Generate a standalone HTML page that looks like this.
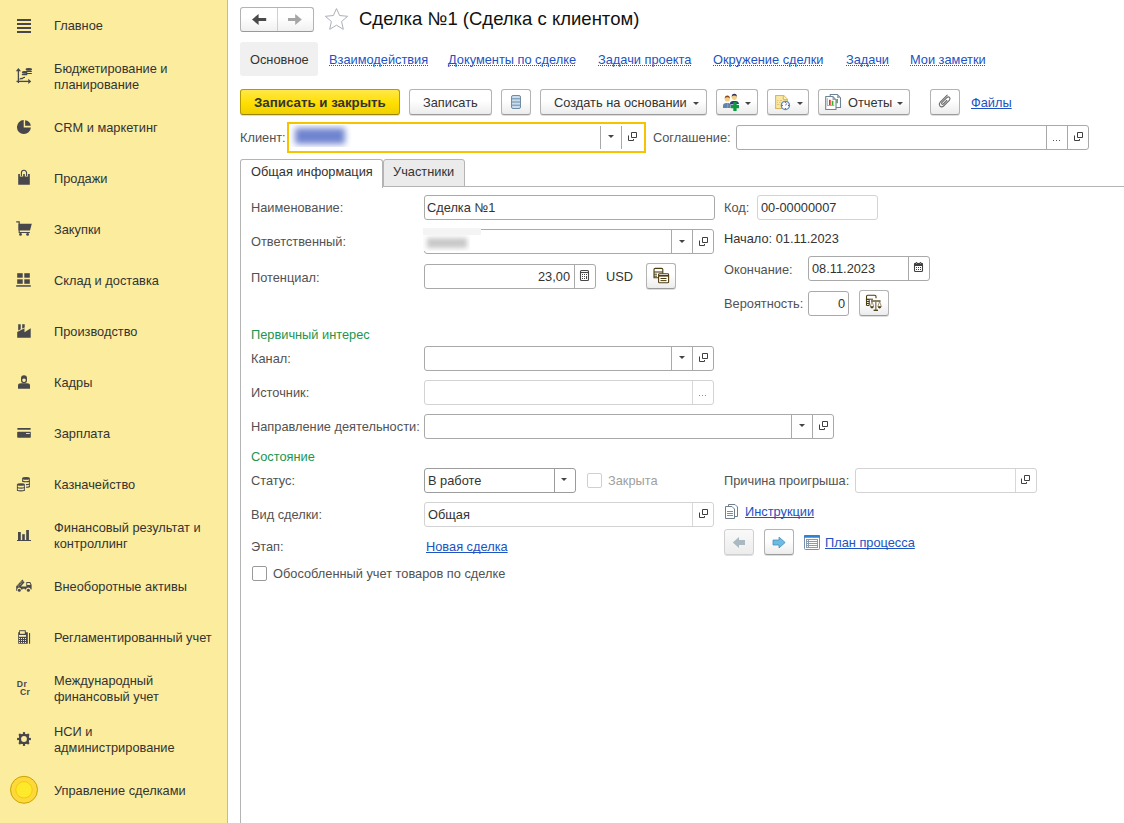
<!DOCTYPE html>
<html><head><meta charset="utf-8">
<style>
*{margin:0;padding:0;box-sizing:border-box}
html,body{width:1124px;height:823px;overflow:hidden;background:#fff;font-family:"Liberation Sans",sans-serif;font-size:13px;color:#333}
.a{position:absolute}
.t{position:absolute;white-space:nowrap;line-height:15px;font-size:13px}
#side{position:absolute;left:0;top:0;width:228px;height:823px;background:#fbec9e;border-right:1px solid #cbbb7e}
.si{position:absolute;left:54px;color:#333;line-height:16px;font-size:12.8px}
.ic{position:absolute;left:12px;width:24px;height:24px}
.ic{fill:#47474c}
</style></head><body>
<div id="side">
<!-- 1 Главное -->
<svg class="ic" style="top:13px" viewBox="0 0 24 24"><rect x="5" y="6" width="14" height="2"/><rect x="5" y="10" width="14" height="2"/><rect x="5" y="14" width="14" height="2"/><rect x="5" y="18" width="14" height="2"/></svg>
<div class="si" style="top:18px">Главное</div>
<!-- 2 -->
<svg class="ic" style="top:64px" viewBox="0 0 24 24"><path d="M6.4 5.5v13.5" stroke="#47474c" stroke-width="1.3" fill="none"/><path d="M3.8 7.2L6.4 4 9 7.2z"/><path d="M4.5 17.4h13" stroke="#47474c" stroke-width="1.3" fill="none"/><path d="M16.3 14.8L19.2 17.4 16.3 20z"/><path d="M7.6 15.4L9 14.3 10.3 14.5 11.6 13.5 13 13.4" stroke="#47474c" stroke-width="1.2" fill="none"/><ellipse cx="16.8" cy="5.4" rx="3.2" ry="1.3"/><path d="M14.2 7.5H19.4M14.2 9.5H19.4" stroke="#47474c" stroke-width="1.1" stroke-linecap="round" fill="none"/><ellipse cx="12.6" cy="8.4" rx="2.8" ry="1.3"/><path d="M10.3 10.6H14.9" stroke="#47474c" stroke-width="1.1" stroke-linecap="round" fill="none"/></svg>
<div class="si" style="top:61px">Бюджетирование и<br>планирование</div>
<!-- 3 CRM -->
<svg class="ic" style="top:115px" viewBox="0 0 24 24"><path d="M11.7 5.1A7 7 0 1 0 18.9 12.6H11.7z"/><path d="M13.1 5.2A6 6 0 0 1 18.8 10.8H13.1z"/></svg>
<div class="si" style="top:120px">CRM и маркетинг</div>
<!-- 4 Продажи -->
<svg class="ic" style="top:166px" viewBox="0 0 24 24"><path d="M6.2 8H7.9V10.6H11.2V8H12.8V10.6H16.1V8H17.8V18.8H6.2z"/><path d="M9.4 10V6.9A2.6 2.6 0 0 1 14.6 6.9V10" stroke="#47474c" stroke-width="1.1" fill="none"/></svg>
<div class="si" style="top:171px">Продажи</div>
<!-- 5 Закупки -->
<svg class="ic" style="top:217px" viewBox="0 0 24 24"><path d="M4.2 4.8H7.2V13.5" stroke="#47474c" stroke-width="1.2" fill="none"/><path d="M6.5 6.8H19.8L18 13.6H6.5z"/><path d="M7.2 13.5V15.5H17.8" stroke="#47474c" stroke-width="1.1" fill="none"/><circle cx="8.5" cy="17.4" r="1.4"/><circle cx="15.6" cy="17.4" r="1.4"/></svg>
<div class="si" style="top:222px">Закупки</div>
<!-- 6 Склад -->
<svg class="ic" style="top:268px" viewBox="0 0 24 24"><rect x="5.2" y="5.2" width="5.5" height="4.5"/><rect x="12.3" y="5.2" width="5.5" height="4.5"/><rect x="5.2" y="11.3" width="5.5" height="4.5"/><rect x="12.3" y="11.3" width="5.5" height="4.5"/><rect x="4.2" y="17.2" width="14.6" height="1.5"/></svg>
<div class="si" style="top:273px">Склад и доставка</div>
<!-- 7 Производство -->
<svg class="ic" style="top:319px" viewBox="0 0 24 24"><path d="M6.2 5.2H8.7V10.3L6.2 11.6z"/><path d="M10.2 5.2H12.7V8.4L10.2 9.6z"/><path d="M5.2 13L12.5 9.3V13.2L18.7 9.2V18.7H5.2z"/></svg>
<div class="si" style="top:324px">Производство</div>
<!-- 8 Кадры -->
<svg class="ic" style="top:370px" viewBox="0 0 24 24"><path d="M9 8.5A3 3.3 0 0 1 15 8.5V10.5A3 2.8 0 0 1 9 10.5z"/><path d="M10.3 9.3Q12 7.6 13.7 9.3V11Q12 13.2 10.3 11z" fill="#fbec9e" style="fill:#fbec9e"/><path d="M6 18.7V15.6Q6 13.3 9 13.3H15Q18 13.3 18 15.6V18.7z"/></svg>
<div class="si" style="top:375px">Кадры</div>
<!-- 9 Зарплата -->
<svg class="ic" style="top:421px" viewBox="0 0 24 24"><rect x="5.2" y="7" width="13.6" height="1.8" rx=".8"/><path d="M5.2 11.2Q5.2 10.8 5.8 10.8H18.2Q18.8 10.8 18.8 11.4V16.1Q18.8 16.8 18 16.8H6Q5.2 16.8 5.2 16z"/><rect x="14" y="12.1" width="3.8" height="0.9" style="fill:#fbec9e"/></svg>
<div class="si" style="top:426px">Зарплата</div>
<!-- 10 Казначейство -->
<svg class="ic" style="top:472px" viewBox="0 0 24 24"><ellipse cx="14" cy="6.4" rx="3.8" ry="1.3"/><path d="M10.2 8.6Q14 9.9 17.8 8.6V9.7Q14 11 10.2 9.7z"/><path d="M14 12.1Q16 12.1 17.8 11.5V12.6Q16 13.2 14 13.2z"/><path d="M14 14.7Q16 14.7 17.8 14.1V15.2Q16 15.8 14 15.8z"/><path d="M10.6 6.4V9.6M17.4 6.4V15" stroke="#47474c" stroke-width=".9" fill="none"/><ellipse cx="8.9" cy="12.5" rx="3.9" ry="1.3"/><path d="M5 14.9Q8.9 16.2 12.8 14.9V16Q8.9 17.3 5 16z"/><path d="M5 17.7Q8.9 19 12.8 17.7V18.8Q8.9 20.1 5 18.8z"/><path d="M5.4 12.5V18.6M12.4 12.5V18.6" stroke="#47474c" stroke-width=".9" fill="none"/></svg>
<div class="si" style="top:477px">Казначейство</div>
<!-- 11 Финансовый -->
<svg class="ic" style="top:523px" viewBox="0 0 24 24"><rect x="6" y="9" width="2.8" height="8.5"/><rect x="10.2" y="11.2" width="2.6" height="6.3"/><rect x="14.2" y="7" width="2.7" height="10.5"/><rect x="5" y="17" width="14" height="1"/></svg>
<div class="si" style="top:520px">Финансовый результат и<br>контроллинг</div>
<!-- 12 Внеоборотные -->
<svg class="ic" style="top:574px" viewBox="0 0 24 24"><path d="M4.2 12.2L10.4 5.6 12.6 8.3 8.8 12.6H14.3V8H18.2L19.6 10.8V15.5H18.8Q18.5 13.5 16.4 13.5Q14.3 13.5 14 15.6H12.8V14.7H10.6V15.5H9.2Q8.8 13.6 7.3 13.6Q5.2 13.6 5 16.7H4.2z"/><path d="M15.2 9.1V11H18.5L17.6 9.1z" style="fill:#fbec9e"/><path d="M5.6 11.9L10.8 6.3M6.6 12.4L11.6 7.2" stroke="#fbec9e" stroke-width=".7" stroke-dasharray=".9 1.1" fill="none"/><circle cx="7.3" cy="16.3" r="1.5"/><circle cx="16.4" cy="16.3" r="1.5"/></svg>
<div class="si" style="top:579px">Внеоборотные активы</div>
<!-- 13 Регламентированный -->
<svg class="ic" style="top:625px" viewBox="0 0 24 24"><path d="M7.2 5.2H13.8V7.2H15.8V18.8H6.2V7.2H7.2z"/><rect x="8" y="6.2" width="4.8" height="2.6" style="fill:#fbec9e"/><rect x="7" y="10" width="7" height="1.8" style="fill:#fbec9e"/><g style="fill:#fbec9e"><rect x="7" y="13" width="1" height="1"/><rect x="9" y="13" width="1" height="1"/><rect x="11" y="13" width="1" height="1"/><rect x="13" y="13" width="1" height="1"/><rect x="7" y="15" width="1" height="1"/><rect x="9" y="15" width="1" height="1"/><rect x="11" y="15" width="1" height="1"/><rect x="13" y="15" width="1" height="1"/><rect x="7" y="17" width="1" height="1"/><rect x="9" y="17" width="1" height="1"/><rect x="11" y="17" width="1" height="1"/><rect x="13" y="17" width="1" height="1"/></g><rect x="17" y="8" width="1.1" height="10.8"/></svg>
<div class="si" style="top:630px">Регламентированный учет</div>
<!-- 14 Dr Cr -->
<svg class="ic" style="top:676px" viewBox="0 0 24 24"><text x="4.8" y="11" style="font:bold 8.6px 'Liberation Sans';letter-spacing:.4px;fill:#47474c">Dr</text><text x="7.9" y="19" style="font:bold 8.6px 'Liberation Sans';letter-spacing:.4px;fill:#47474c">Cr</text></svg>
<div class="si" style="top:673px">Международный<br>финансовый учет</div>
<!-- 15 НСИ gear -->
<svg class="ic" style="top:727px" viewBox="0 0 24 24"><rect x="7" y="7" width="10" height="10" rx="3"/><rect x="10.9" y="5.1" width="2.2" height="3" transform="rotate(0 12 12)"/><rect x="10.9" y="5.1" width="2.2" height="3" transform="rotate(45 12 12)"/><rect x="10.9" y="5.1" width="2.2" height="3" transform="rotate(90 12 12)"/><rect x="10.9" y="5.1" width="2.2" height="3" transform="rotate(135 12 12)"/><rect x="10.9" y="5.1" width="2.2" height="3" transform="rotate(180 12 12)"/><rect x="10.9" y="5.1" width="2.2" height="3" transform="rotate(225 12 12)"/><rect x="10.9" y="5.1" width="2.2" height="3" transform="rotate(270 12 12)"/><rect x="10.9" y="5.1" width="2.2" height="3" transform="rotate(315 12 12)"/><circle cx="12" cy="12" r="2.9" style="fill:#fbec9e"/></svg>
<div class="si" style="top:724px">НСИ и<br>администрирование</div>
<!-- 16 circle -->
<svg class="a" style="left:9px;top:775px;width:30px;height:30px" viewBox="0 0 30 30"><circle cx="15" cy="14.8" r="13.5" fill="#ffd83c" stroke="#c7a600" stroke-width="1"/><circle cx="15" cy="14.8" r="8.2" fill="#ffe92b" stroke="#f0c400" stroke-width=".8"/></svg>
<div class="si" style="top:783px">Управление сделками</div>
</div>

<div id="main">
<style>
.lb{position:absolute;white-space:nowrap;font-size:12.8px;line-height:16px;color:#525252}
.lk{position:absolute;white-space:nowrap;font-size:12.8px;line-height:16px;color:#2152c2}
.lku{text-decoration:underline;text-underline-offset:1px;text-decoration-skip-ink:none}
.dot{background-image:linear-gradient(to right,#2152c2 50%,transparent 50%);background-size:2px 1px;background-repeat:repeat-x;background-position:0 13px}
.fld{position:absolute;background:#fff;border:1px solid #a9a9a9;border-radius:3px}
.fld.lt{border-color:#d3d3d3}
.sp{position:absolute;top:0;bottom:0;width:1px;background:#a9a9a9}
.btn{position:absolute;height:26px;border:1px solid #b3b3b3;border-bottom-color:#9a9a9a;border-radius:3px;background:linear-gradient(#fff 0%,#fff 45%,#ececec 100%);box-shadow:0 1px 0 rgba(0,0,0,.13)}
.bt{position:absolute;white-space:nowrap;font-size:12.8px;line-height:16px;color:#333}
.dd{position:absolute;width:0;height:0;border-left:3px solid transparent;border-right:3px solid transparent;border-top:3px solid #444}
.op{position:absolute;width:10px;height:10px}
.vt{position:absolute;white-space:nowrap;font-size:12.8px;line-height:16px;color:#333}
.grn{position:absolute;white-space:nowrap;font-size:12.8px;line-height:16px;color:#1a9650}
</style>
<!-- nav -->
<div class="a" style="left:240px;top:7px;width:74px;height:25px;border:1px solid #b3b3b3;border-bottom-color:#999;border-radius:3px;background:linear-gradient(#fff 40%,#f0f0f0)"></div>
<div class="a" style="left:277px;top:8px;width:1px;height:23px;background:#d0d0d0"></div>
<svg class="a" style="left:250px;top:12px;width:18px;height:16px" viewBox="0 0 18 16"><path d="M2 7.5L8.6 2V6H16.2V9H8.6V13z" fill="#4a4a4a"/></svg>
<svg class="a" style="left:286px;top:12px;width:18px;height:16px" viewBox="0 0 18 16"><path d="M15.8 7.5L9.2 2V6H2V9H9.2V13z" fill="#a5a5a5"/></svg>
<svg class="a" style="left:323px;top:7px;width:27px;height:24px" viewBox="0 0 27 24"><path d="M13.5 1.6L16.6 8.5 24.6 9.3 18.6 14.5 20.3 22.3 13.5 18.2 6.7 22.3 8.4 14.5 2.4 9.3 10.4 8.5z" fill="none" stroke="#aab1b9" stroke-width="1"/></svg>
<div class="a" style="left:359px;top:8px;font-size:18.5px;line-height:21px;color:#111;white-space:nowrap">Сделка №1 (Сделка с клиентом)</div>

<!-- section tabs -->
<div class="a" style="left:240px;top:42px;width:78px;height:34px;background:#f0f0f0;border-radius:3px"></div>
<div class="bt" style="left:250px;top:52px">Основное</div>
<div class="lk dot" style="left:329px;top:52px">Взаимодействия</div>
<div class="lk dot" style="left:448px;top:52px">Документы по сделке</div>
<div class="lk dot" style="left:598px;top:52px">Задачи проекта</div>
<div class="lk dot" style="left:713px;top:52px">Окружение сделки</div>
<div class="lk dot" style="left:846px;top:52px">Задачи</div>
<div class="lk dot" style="left:910px;top:52px">Мои заметки</div>

<!-- command bar -->
<div class="btn" style="left:240px;top:89px;width:160px;border-color:#b39b00;border-bottom-color:#9a8400;background:linear-gradient(#ffe84a,#ffdf00 55%,#f0cf00)"></div>
<div class="bt" style="left:254px;top:95px;font-weight:bold;font-size:13.3px;color:#333">Записать и закрыть</div>
<div class="btn" style="left:409px;top:89px;width:83px"></div>
<div class="bt" style="left:423px;top:95px">Записать</div>
<div class="btn" style="left:501px;top:89px;width:30px"></div>
<svg class="a" style="left:510px;top:94px;width:12px;height:16px" viewBox="0 0 12 16"><rect x="1.5" y="1.5" width="9" height="13" rx="1.5" fill="#c9dced" stroke="#6d8ca6" stroke-width="1"/><path d="M1.5 4.8H10.5M1.5 8H10.5M1.5 11.2H10.5" stroke="#6d8ca6" stroke-width="1"/></svg>
<div class="btn" style="left:540px;top:89px;width:167px"></div>
<div class="bt" style="left:554px;top:95px">Создать на основании</div>
<div class="dd" style="left:693px;top:102px"></div>
<div class="btn" style="left:716px;top:89px;width:42px"></div>
<svg class="a" style="left:716px;top:88px;width:30px;height:28px" viewBox="0 0 30 28"><path d="M7 20V17.6Q7 15 10.5 15H12.3Q14.6 15 14.6 17.5V20z" fill="#5a86b0"/><rect x="11" y="15" width="1.2" height="5" fill="#e07a5a"/><circle cx="11.3" cy="11" r="2.6" fill="#f3cf86"/><path d="M8.7 10.6Q8.7 7.6 11.3 7.6Q13.9 7.6 13.9 10.6Q12.5 9 11.3 9.3Q10 9 8.7 10.6z" fill="#8a4a12"/><path d="M13.6 16.4Q14.2 13 17 13H19.6Q22.6 13 23 16z" fill="#2f3c78"/><circle cx="18.3" cy="9.3" r="2.6" fill="#f3cf86"/><path d="M15.7 8.8Q15.7 5.8 18.3 5.8Q20.9 5.8 20.9 8.8Q19.5 7.2 18.3 7.5Q17 7.2 15.7 8.8z" fill="#2e2e58"/><path d="M17.3 14H20.6V17H23V20.3H20.6V23H17.3V20.3H14.8V17H17.3z" fill="#0b9b3e"/></svg>
<div class="dd" style="left:745px;top:102px"></div>
<div class="btn" style="left:767px;top:89px;width:42px"></div>
<svg class="a" style="left:767px;top:88px;width:30px;height:28px" viewBox="0 0 30 28"><path d="M8.6 7.5H16.5L20.5 11.5V20.5H8.6z" fill="#fbe7a2" stroke="#d7b75a" stroke-width="1.1" stroke-linejoin="round"/><path d="M16.3 7.5V11.6H20.5" fill="#fff3c8" stroke="#d7b75a" stroke-width="1"/><path d="M10 12.5H11.5M12.8 12.5H15M10 14.5H11M12 14.5H13.5M10 16.5H12.5" stroke="#e0c77a" stroke-width="1"/><circle cx="18.4" cy="17.4" r="4.1" fill="#fff" stroke="#5b8cc4" stroke-width="1.3"/><path d="M18.4 17.4L20 15.4" stroke="#7aa0d8" stroke-width="1.2"/><circle cx="18.4" cy="14.3" r=".6" fill="#e02020"/><circle cx="18.4" cy="20.5" r=".6" fill="#e02020"/><circle cx="15.3" cy="17.4" r=".6" fill="#e02020"/><circle cx="21.5" cy="17.4" r=".6" fill="#e02020"/></svg>
<div class="dd" style="left:797px;top:102px"></div>
<div class="btn" style="left:818px;top:89px;width:92px"></div>
<svg class="a" style="left:818px;top:88px;width:28px;height:28px" viewBox="0 0 28 28"><path d="M12.2 6.5H19.2L22.5 9.8V19.5H12.2z" fill="#fff" stroke="#6f8296" stroke-width="1.1" stroke-linejoin="round"/><path d="M19 6.5V10H22.5z" fill="#9aa8b6"/><rect x="18.3" y="11" width="1.6" height="4.2" fill="#3bb02a"/><path d="M7.7 8.5H14.7L18 11.8V21.5H7.7z" fill="#fff" stroke="#6f8296" stroke-width="1.1" stroke-linejoin="round"/><path d="M14.5 8.5V12H18z" fill="#9aa8b6"/><path d="M9.3 10.2V17.5H16.3" fill="none" stroke="#8a8a8a" stroke-width=".7"/><rect x="11" y="11.8" width="1.7" height="5.2" fill="#e8301e"/><rect x="13.7" y="12.8" width="1.7" height="4.2" fill="#3bb02a"/></svg>
<div class="bt" style="left:848px;top:95px">Отчеты</div>
<div class="dd" style="left:897px;top:102px"></div>
<div class="btn" style="left:930px;top:89px;width:30px"></div>
<svg class="a" style="left:936px;top:93px;width:18px;height:18px" viewBox="0 0 18 18"><path d="M11.2 2.2L4.2 9.2Q2.6 11 3.8 12.8Q5.6 14.9 7.6 13L13.3 7.4Q14.7 5.7 13.5 4.4Q12.2 3.2 10.8 4.6L5.8 9.6Q5.2 10.5 5.9 11.1Q6.6 11.6 7.3 11L10.8 7.5" fill="none" stroke="#6a6a6a" stroke-width="1.1" stroke-linecap="round"/></svg>
<div class="lk lku" style="left:971px;top:95px">Файлы</div>

<!-- client row -->
<div class="lb" style="left:240px;top:130px">Клиент:</div>
<div class="a" style="left:287px;top:122px;width:359px;height:31px;border:2px solid #f7c300;background:#fff"></div>
<div class="a" style="left:290px;top:125px;width:62px;height:22px;overflow:hidden;background:#fff"><div style="position:absolute;left:5px;top:3px;width:50px;height:16px;background:#6f84d0;filter:blur(3px)"></div></div>
<div class="a" style="left:600px;top:126px;width:1px;height:23px;background:#a8a8a8"></div>
<div class="a" style="left:621px;top:126px;width:1px;height:23px;background:#a8a8a8"></div>
<div class="dd" style="left:608px;top:135px"></div>
<svg class="op" style="left:627px;top:131px" viewBox="0 0 10 10"><path d="M4.5 1.5H9.5V6.5H4.5z" fill="none" stroke="#3f3f3f" stroke-width="1"/><path d="M1.5 4.5V9.5H6.5V8" fill="none" stroke="#3f3f3f" stroke-width="1"/></svg>
<div class="lb" style="left:653px;top:130px">Соглашение:</div>
<div class="fld" style="left:736px;top:125px;width:353px;height:25px"><div class="sp" style="left:309px"></div><div class="sp" style="left:330px"></div></div>
<div class="a" style="left:1053px;top:140px;width:1px;height:1px;background:#555"></div><div class="a" style="left:1056px;top:140px;width:1px;height:1px;background:#555"></div><div class="a" style="left:1059px;top:140px;width:1px;height:1px;background:#555"></div>
<svg class="op" style="left:1073px;top:131px" viewBox="0 0 10 10"><path d="M4.5 1.5H9.5V6.5H4.5z" fill="none" stroke="#3f3f3f" stroke-width="1"/><path d="M1.5 4.5V9.5H6.5V8" fill="none" stroke="#3f3f3f" stroke-width="1"/></svg>

<!-- tabs -->
<div class="a" style="left:240px;top:186px;width:884px;height:1px;background:#b4b4b4"></div>
<div class="a" style="left:240px;top:186px;width:1px;height:637px;background:#b4b4b4"></div>
<div class="a" style="left:383px;top:159px;width:82px;height:28px;border:1px solid #b4b4b4;border-radius:3px 3px 0 0;background:#ebebeb"></div>
<div class="a" style="left:240px;top:159px;width:143px;height:29px;border:1px solid #b4b4b4;border-bottom:none;border-radius:3px 3px 0 0;background:#fff"></div>
<div class="bt" style="left:251px;top:164px">Общая информация</div>
<div class="bt" style="left:393px;top:164px">Участники</div>

<!-- form left column -->
<div class="lb" style="left:251px;top:200px">Наименование:</div>
<div class="fld" style="left:424px;top:195px;width:291px;height:25px"></div>
<div class="vt" style="left:427px;top:200px">Сделка №1</div>

<div class="lb" style="left:251px;top:234px">Ответственный:</div>
<div class="fld" style="left:424px;top:229px;width:290px;height:25px"><div class="sp" style="left:246px"></div><div class="sp" style="left:267px"></div></div>
<div class="a" style="left:423px;top:228px;width:58px;height:7px;background:#f4f4f4"></div>
<div class="a" style="left:423px;top:235px;width:47px;height:16px;overflow:hidden;background:#fdfdfd"><div style="position:absolute;left:4px;top:3px;width:40px;height:10px;background:#cacaca;filter:blur(2px)"></div></div>
<div class="dd" style="left:679px;top:240px"></div>
<svg class="op" style="left:698px;top:236px" viewBox="0 0 10 10"><path d="M4.5 1.5H9.5V6.5H4.5z" fill="none" stroke="#3f3f3f" stroke-width="1"/><path d="M1.5 4.5V9.5H6.5V8" fill="none" stroke="#3f3f3f" stroke-width="1"/></svg>

<div class="lb" style="left:251px;top:270px">Потенциал:</div>
<div class="fld" style="left:424px;top:264px;width:172px;height:25px"><div class="sp" style="left:149px"></div></div>
<div class="vt" style="left:538px;top:269px">23,00</div>
<svg class="a" style="left:579px;top:269px;width:11px;height:13px" viewBox="0 0 11 13"><rect x="1.5" y="1.5" width="8" height="10" rx="1" fill="#fff" stroke="#474747" stroke-width="1.1"/><path d="M1.5 3.5H9.5" stroke="#474747" stroke-width="1.1"/><g fill="#474747"><rect x="3" y="5" width="1" height="1"/><rect x="5" y="5" width="1" height="1"/><rect x="7" y="5" width="1" height="1"/><rect x="3" y="7" width="1" height="1"/><rect x="5" y="7" width="1" height="1"/><rect x="3" y="9" width="1" height="1"/><rect x="5" y="9" width="1" height="1"/><rect x="7" y="7" width="1" height="3"/></g></svg>
<div class="vt" style="left:606px;top:269px">USD</div>
<div class="btn" style="left:646px;top:263px;width:30px"></div>
<svg class="a" style="left:646px;top:263px;width:30px;height:26px" viewBox="0 0 30 26"><path d="M8 6.6Q8 5.4 9.2 5.4H15.6Q16.8 5.4 16.8 6.6V14.8H8z" fill="#fff" stroke="#4e3c12" stroke-width="1.1"/><path d="M8 9H16.8" stroke="#4e3c12" stroke-width="1.1"/><path d="M8 11.2H11M8 13.2H11" stroke="#4e3c12" stroke-width="1"/><path d="M12.6 11.6Q12.6 10.7 13.5 10.7H21.6Q22.6 10.7 22.6 11.6V18.9Q22.6 19.8 21.6 19.8H13.5Q12.6 19.8 12.6 18.9z" fill="#fff" stroke="#4e3c12" stroke-width="1.1"/><path d="M12.6 12.8H22.6" stroke="#4e3c12" stroke-width="1.6"/><path d="M14.5 15.5H20.5M14.5 17.6H20.5" stroke="#4e3c12" stroke-width="1"/></svg>

<!-- right column -->
<div class="lb" style="left:724px;top:200px">Код:</div>
<div class="fld lt" style="left:757px;top:195px;width:121px;height:25px"></div>
<div class="vt" style="left:761px;top:200px">00-00000007</div>
<div class="vt" style="left:724px;top:231px">Начало: 01.11.2023</div>
<div class="lb" style="left:724px;top:262px">Окончание:</div>
<div class="fld" style="left:808px;top:256px;width:122px;height:25px"><div class="sp" style="left:99px"></div></div>
<div class="vt" style="left:812px;top:261px">08.11.2023</div>
<svg class="a" style="left:913px;top:261px;width:11px;height:12px" viewBox="0 0 11 12"><rect x="1.5" y="2.5" width="8" height="8" rx="1" fill="#fff" stroke="#404040" stroke-width="1.1"/><rect x="1" y="2" width="9" height="3" rx="1" fill="#404040"/><circle cx="3.5" cy="1.8" r=".9" fill="#404040"/><circle cx="7.5" cy="1.8" r=".9" fill="#404040"/><circle cx="3.5" cy="2.4" r=".45" fill="#fff"/><circle cx="7.5" cy="2.4" r=".45" fill="#fff"/><g fill="#404040"><rect x="3" y="6" width="1" height="1"/><rect x="5" y="6" width="1" height="1"/><rect x="7" y="6" width="1" height="1"/><rect x="3" y="8" width="1" height="1"/><rect x="5" y="8" width="1" height="1"/><rect x="7" y="8" width="1" height="1"/></g></svg>
<div class="lb" style="left:724px;top:296px">Вероятность:</div>
<div class="fld" style="left:808px;top:291px;width:41px;height:25px"></div>
<div class="vt" style="left:838px;top:296px">0</div>
<div class="btn" style="left:859px;top:290px;width:30px"></div>
<svg class="a" style="left:856px;top:286px;width:36px;height:32px" viewBox="0 0 36 32"><path d="M10.5 19.5V10.5Q10.5 9.3 11.7 9.3H18.8Q20 9.3 20 10.5V12.2" fill="none" stroke="#4c3b12" stroke-width="1.1"/><path d="M10.5 19.5H13.2V13.5H10.5M10.5 15.5H13.5M10.5 17.5H13.5M10.5 13.2H17" fill="none" stroke="#4c3b12" stroke-width="1"/><path d="M15 15H24.6" stroke="#4c3b12" stroke-width="1.3"/><path d="M19.8 14.6V24" stroke="#8c7f62" stroke-width="1.4"/><path d="M17.6 24.3H22" stroke="#4c3b12" stroke-width="1.3"/><path d="M16 15.5L14.3 20.3M16 15.5L17.7 20.3M23.6 15.5L21.9 20.3M23.6 15.5L25.3 20.3" stroke="#7a6b48" stroke-width=".7"/><path d="M14 20.3H18Q17.6 22.4 16 22.4Q14.4 22.4 14 20.3z M21.6 20.3H25.6Q25.2 22.4 23.6 22.4Q22 22.4 21.6 20.3z" fill="#4c3b12"/></svg>

<!-- Первичный интерес -->
<div class="grn" style="left:251px;top:327px">Первичный интерес</div>
<div class="lb" style="left:251px;top:351px">Канал:</div>
<div class="fld" style="left:424px;top:346px;width:290px;height:25px"><div class="sp" style="left:246px"></div><div class="sp" style="left:267px"></div></div>
<div class="dd" style="left:679px;top:356px"></div>
<svg class="op" style="left:698px;top:352px" viewBox="0 0 10 10"><path d="M4.5 1.5H9.5V6.5H4.5z" fill="none" stroke="#3f3f3f" stroke-width="1"/><path d="M1.5 4.5V9.5H6.5V8" fill="none" stroke="#3f3f3f" stroke-width="1"/></svg>
<div class="lb" style="left:251px;top:385px">Источник:</div>
<div class="fld lt" style="left:424px;top:380px;width:290px;height:25px;background:#fff"><div class="sp" style="left:267px;background:#d8d8d8"></div></div>
<div class="a" style="left:699px;top:395px;width:1px;height:1px;background:#8a8a8a"></div><div class="a" style="left:702px;top:395px;width:1px;height:1px;background:#8a8a8a"></div><div class="a" style="left:705px;top:395px;width:1px;height:1px;background:#8a8a8a"></div>
<div class="lb" style="left:251px;top:419px">Направление деятельности:</div>
<div class="fld" style="left:424px;top:414px;width:410px;height:25px"><div class="sp" style="left:366px"></div><div class="sp" style="left:387px"></div></div>
<div class="dd" style="left:799px;top:424px"></div>
<svg class="op" style="left:818px;top:420px" viewBox="0 0 10 10"><path d="M4.5 1.5H9.5V6.5H4.5z" fill="none" stroke="#3f3f3f" stroke-width="1"/><path d="M1.5 4.5V9.5H6.5V8" fill="none" stroke="#3f3f3f" stroke-width="1"/></svg>

<!-- Состояние -->
<div class="grn" style="left:251px;top:449px">Состояние</div>
<div class="lb" style="left:251px;top:473px">Статус:</div>
<div class="fld" style="left:424px;top:468px;width:152px;height:25px;border-color:#9c9c9c"><div class="sp" style="left:129px;background:#9c9c9c"></div></div>
<div class="vt" style="left:428px;top:473px">В работе</div>
<div class="dd" style="left:561px;top:478px"></div>
<div class="a" style="left:587px;top:473px;width:15px;height:15px;border:1px solid #d0d0d0;border-radius:2px"></div>
<div class="lb" style="left:608px;top:473px;color:#a0a0a0">Закрыта</div>
<div class="lb" style="left:724px;top:473px">Причина проигрыша:</div>
<div class="fld lt" style="left:855px;top:468px;width:182px;height:25px"><div class="sp" style="left:159px;background:#d8d8d8"></div></div>
<svg class="op" style="left:1020px;top:474px" viewBox="0 0 10 10"><path d="M4.5 1.5H9.5V6.5H4.5z" fill="none" stroke="#3f3f3f" stroke-width="1"/><path d="M1.5 4.5V9.5H6.5V8" fill="none" stroke="#3f3f3f" stroke-width="1"/></svg>

<div class="lb" style="left:251px;top:507px">Вид сделки:</div>
<div class="fld lt" style="left:424px;top:502px;width:290px;height:25px"><div class="sp" style="left:267px;background:#d8d8d8"></div></div>
<div class="vt" style="left:428px;top:507px">Общая</div>
<svg class="op" style="left:698px;top:508px" viewBox="0 0 10 10"><path d="M4.5 1.5H9.5V6.5H4.5z" fill="none" stroke="#3f3f3f" stroke-width="1"/><path d="M1.5 4.5V9.5H6.5V8" fill="none" stroke="#3f3f3f" stroke-width="1"/></svg>
<svg class="a" style="left:724px;top:503px;width:15px;height:17px" viewBox="0 0 15 17"><path d="M4.5 1.5H11L13.5 4V13.5H4.5z" fill="#fff" stroke="#6f7f8e" stroke-width="1"/><path d="M1.5 3.5H8L10.5 6V15.5H1.5z" fill="#fff" stroke="#6f7f8e" stroke-width="1"/><path d="M3 8.5H9M3 10.5H9M3 12.5H9" stroke="#7f8d9a" stroke-width="1"/></svg>
<div class="lk lku" style="left:745px;top:504px">Инструкции</div>

<div class="lb" style="left:251px;top:539px">Этап:</div>
<div class="lk lku" style="left:426px;top:539px">Новая сделка</div>
<div class="btn" style="left:724px;top:529px;width:30px;border-color:#d0d0d0;background:linear-gradient(#fafafa,#ececec)"></div>
<svg class="a" style="left:730px;top:535px;width:18px;height:15px" viewBox="0 0 18 15"><path d="M2.8 7.5L9 2.1V5H15V10H9V12.9z" fill="#aab8c2"/></svg>
<div class="btn" style="left:764px;top:529px;width:30px"></div>
<svg class="a" style="left:770px;top:535px;width:18px;height:15px" viewBox="0 0 18 15"><path d="M15.2 7.5L9 2.1V5H3V10H9V12.9z" fill="#6cbbe4" stroke="#4b8fb8" stroke-width=".8" stroke-linejoin="round"/></svg>
<svg class="a" style="left:803px;top:534px;width:18px;height:17px" viewBox="0 0 18 17"><rect x="1.5" y="1.5" width="15" height="14" rx="1" fill="#fff" stroke="#7b8fa6" stroke-width="1"/><rect x="1" y="1" width="16" height="2.8" rx="1" fill="#2f82d2"/><rect x="3.5" y="5.5" width="11" height="8" fill="none" stroke="#8a9bb0" stroke-width="1"/><path d="M3.5 7.5H14.5M3.5 9.5H14.5M3.5 11.5H14.5M5.5 5.5V13.5" stroke="#8a9bb0" stroke-width="1"/></svg>
<div class="lk lku" style="left:825px;top:535px">План процесса</div>

<div class="a" style="left:252px;top:566px;width:15px;height:15px;border:1px solid #9a9a9a;border-radius:2px;background:#fff"></div>
<div class="lb" style="left:273px;top:566px">Обособленный учет товаров по сделке</div>
</div>
</body></html>
